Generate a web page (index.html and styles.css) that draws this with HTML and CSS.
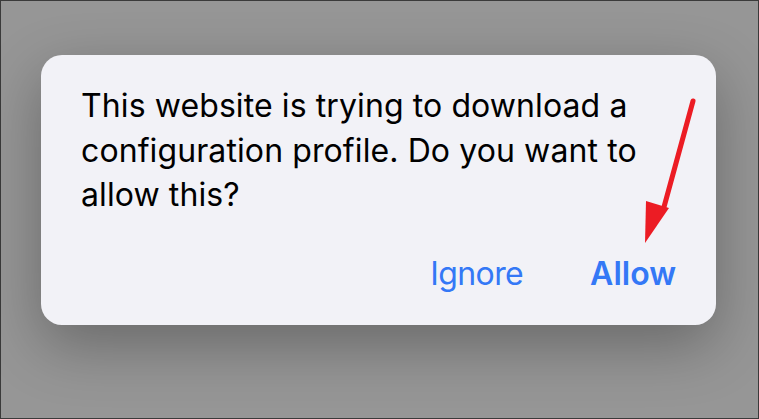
FILE: index.html
```html
<!DOCTYPE html>
<html>
<head lang="en">
    <meta charset="UTF-8">
    <title>Configuration profile</title>
    <link rel="stylesheet" href="styles.css">
</head>
<body>
<div id="screen">
    <div class="dialog">
        <p class="message">This website is trying to download a configuration profile. Do you want to allow this?</p>
        <div class="actions">
            <span class="btn">Ignore</span>
            <span class="btn btn-main">Allow</span>
        </div>
        <!-- red annotation arrow -->
        <svg class="arrow" width="60" height="160" viewBox="0 0 60 160">
            <line x1="53" y1="6" x2="24" y2="112" stroke="#ec1c24" stroke-width="5" stroke-linecap="round"/>
            <polygon points="6,106 29,113 5,148" fill="#ec1c24"/>
        </svg>
    </div>
</div>
</body>
</html>
```

FILE: styles.css
```css
*{
    margin: 0;
    padding: 0;
}
html,body{
    width: 759px;
    height: 419px;
    overflow: hidden;
}
#screen{
    width: 759px;
    height: 419px;
    box-sizing: border-box;
    border: 1px solid #3a3a3a;
    background: #969696;
    padding-top: 54px;
}
.dialog{
    position: relative;
    width: 675px;
    height: 270px;
    margin: 0 0 0 40px;
    box-sizing: border-box;
    padding: 29px 40px 0 40px;
    border-radius: 21px;
    background: #f2f2f7;
    box-shadow: 0 20px 60px rgba(0,0,0,0.3);
    font-family: Inter, "Liberation Sans", sans-serif;
}
.message{
    font-size: 32px;
    line-height: 44.5px;
    color: #000000;
    letter-spacing: 0.1px;
    width: 575px;
}
.actions{
    display: flex;
    justify-content: flex-end;
    gap: 67px;
    margin-top: 34px;
    font-size: 32px;
    line-height: 44px;
    color: #3478f6;
}
.btn{
    cursor: pointer;
    letter-spacing: -0.6px;
}
.btn-main{
    font-weight: 600;
    letter-spacing: 0;
}
.arrow{
    position: absolute;
    left: 599px;
    top: 40px;
}
```
